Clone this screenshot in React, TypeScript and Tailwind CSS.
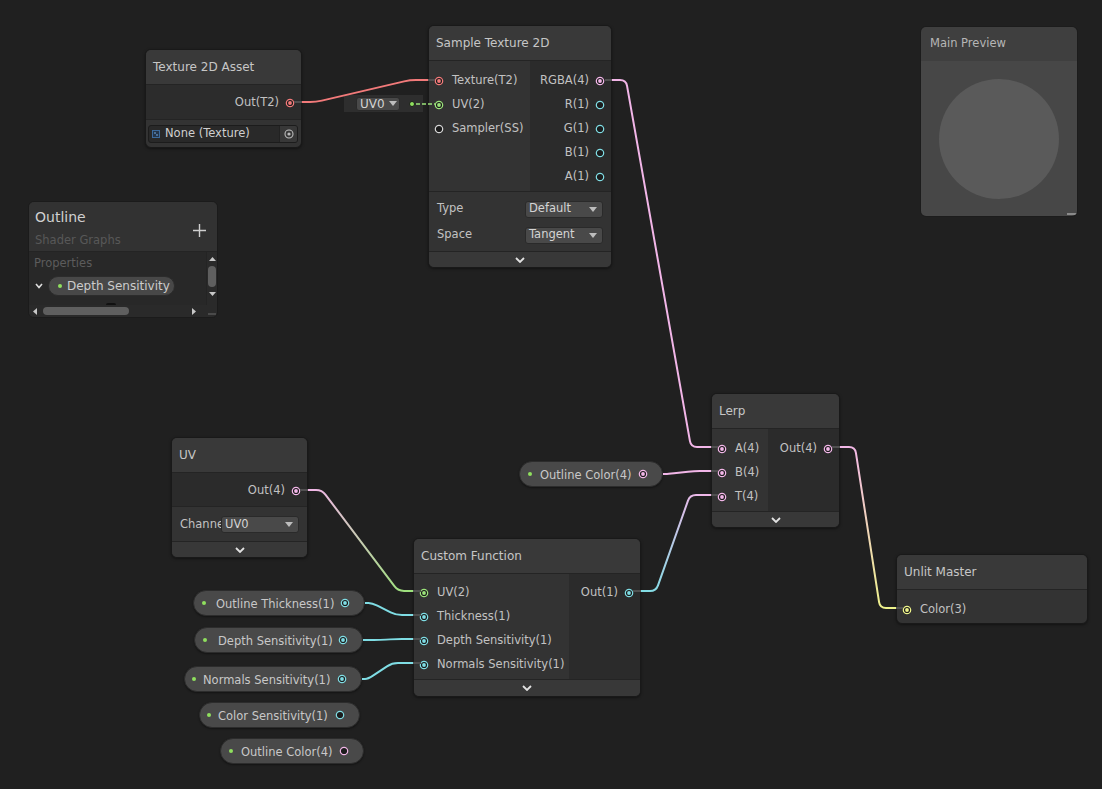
import React from 'react'

const PINK = '#f2b6e8'
const CYAN = '#7fdde4'
const GREEN = '#9be27a'
const YELLOW = '#eef38a'
const RED = '#f27a7a'
const STUB = '#505050'

type Pt = [number, number]

// rounded polyline, like the graph view wires
function wirePath(pts: Pt[], r = 6) {
  let d = `M ${pts[0][0]} ${pts[0][1]}`
  for (let i = 1; i < pts.length - 1; i++) {
    const [px, py] = pts[i - 1]
    const [cx, cy] = pts[i]
    const [nx, ny] = pts[i + 1]
    const l1 = Math.hypot(cx - px, cy - py)
    const l2 = Math.hypot(nx - cx, ny - cy)
    const r1 = Math.min(r, l1 / 2)
    const r2 = Math.min(r, l2 / 2)
    const ax = cx - ((cx - px) / l1) * r1
    const ay = cy - ((cy - py) / l1) * r1
    const bx = cx + ((nx - cx) / l2) * r2
    const by = cy + ((ny - cy) / l2) * r2
    d += ` L ${ax} ${ay} Q ${cx} ${cy} ${bx} ${by}`
  }
  const last = pts[pts.length - 1]
  return d + ` L ${last[0]} ${last[1]}`
}

function Port({ color, connected = false }: { color: string; connected?: boolean }) {
  return (
    <svg width="10" height="10" viewBox="0 0 10 10" className="shrink-0">
      <circle cx="5" cy="5" r="3.7" fill="#1c1c1c" stroke={color} strokeWidth="1.2" />
      {connected && <circle cx="5" cy="5" r="1.9" fill={color} />}
    </svg>
  )
}

function InRow({ label, color, connected }: { label: string; color: string; connected?: boolean }) {
  return (
    <div className="flex h-[24px] items-center gap-[8px] pl-[5px] whitespace-nowrap">
      <Port color={color} connected={connected} />
      <span>{label}</span>
    </div>
  )
}

function OutRow({ label, color, connected }: { label: string; color: string; connected?: boolean }) {
  return (
    <div className="flex h-[24px] items-center justify-end gap-[6px] pr-[6px] whitespace-nowrap">
      <span>{label}</span>
      <Port color={color} connected={connected} />
    </div>
  )
}

function Tri() {
  return (
    <svg width="8" height="5" viewBox="0 0 8 5" className="shrink-0">
      <polygon points="0,0 8,0 4,5" fill="#bdbdbd" />
    </svg>
  )
}

function Dropdown({ value, className }: { value: string; className: string }) {
  return (
    <div
      className={`flex items-center justify-between rounded-[3px] border border-[#2a2a2a] bg-[#494949] pl-[3px] pr-[5px] text-[#d4d4d4] ${className}`}
    >
      <span>{value}</span>
      <Tri />
    </div>
  )
}

function ChevronBar({ className = 'h-[16px]' }: { className?: string }) {
  return (
    <div className={`flex shrink-0 items-center justify-center border-t border-[#242424] bg-[#383838] ${className}`}>
      <svg width="10" height="6" viewBox="0 0 10 6">
        <polyline points="1,1 5,5 9,1" fill="none" stroke="#e2e2e2" strokeWidth="1.8" />
      </svg>
    </div>
  )
}

function Node({ className, title, children }: { className: string; title: string; children: React.ReactNode }) {
  return (
    <div
      className={`absolute flex flex-col overflow-hidden rounded-[6px] border border-[#191919] bg-[#333333] shadow-[0_1px_3px_rgba(0,0,0,0.45)] ${className}`}
    >
      <div className="flex h-[35px] shrink-0 items-center border-b border-[#242424] bg-[#393939] px-[7px] text-[12px] text-[#c6c6c6]">
        {title}
      </div>
      {children}
    </div>
  )
}

function Pill({
  className,
  label,
  color,
  connected,
  pad,
  gap,
}: {
  className: string
  label: string
  color: string
  connected?: boolean
  pad: string
  gap: string
}) {
  return (
    <div
      className={`absolute flex h-[26px] items-center rounded-full border border-[#2c2c2c] bg-[#494949] pr-[14px] whitespace-nowrap text-[#c8c8c8] shadow-[0_1px_2px_rgba(0,0,0,0.4)] ${pad} ${className}`}
    >
      <span className="h-[4px] w-[4px] shrink-0 rounded-full bg-[#8fe05e]" />
      <span className={`pt-[3px] ${gap}`}>{label}</span>
      <span className="ml-auto">
        <Port color={color} connected={connected} />
      </span>
    </div>
  )
}

function Blackboard() {
  return (
    <div className="absolute left-[28px] top-[201px] flex h-[117px] w-[190px] flex-col overflow-hidden rounded-[6px] border border-[#1b1b1b] bg-[#282828]">
      <div className="flex h-[50px] shrink-0 justify-between border-b border-[#242424] bg-[#323232] pl-[6px] pr-[11px]">
        <div className="flex flex-col pt-[6px]">
          <span className="text-[14px] leading-[18px] text-[#d0d0d0]">Outline</span>
          <span className="mt-[7px] text-[11.5px] leading-[14px] text-[#585858]">Shader Graphs</span>
        </div>
        <svg width="13" height="13" viewBox="0 0 13 13" className="mt-[22px]">
          <line x1="6.5" y1="0" x2="6.5" y2="13" stroke="#cfcfcf" strokeWidth="1.4" />
          <line x1="0" y1="6.5" x2="13" y2="6.5" stroke="#cfcfcf" strokeWidth="1.4" />
        </svg>
      </div>
      <div className="flex flex-1">
        <div className="relative flex-1 pl-[5px]">
          <div className="pt-[4px] text-[11.5px] leading-[14px] text-[#5c5c5c]">Properties</div>
          <div className="mt-[6px] flex items-center">
            <svg width="8" height="6" viewBox="0 0 8 6" className="ml-[1px]">
              <polyline points="1,1 4,4.5 7,1" fill="none" stroke="#dcdcdc" strokeWidth="1.6" />
            </svg>
            <div className="ml-[5px] flex h-[20px] w-[127px] items-center rounded-full border border-[#2c2c2c] bg-[#484848] pl-[9px] text-[12px] text-[#cccccc]">
              <span className="h-[4px] w-[4px] rounded-full bg-[#8fe05e]" />
              <span className="ml-[5px]">Depth Sensitivity</span>
            </div>
          </div>
          <div className="absolute left-[77px] bottom-0 h-[2px] w-[10px] rounded-t bg-[#111111]" />
        </div>
        <div className="flex w-[11px] flex-col items-center border-l border-[#242424] bg-[#2a2a2a] pt-[5px]">
          <svg width="7" height="4" viewBox="0 0 7 4">
            <polygon points="0,4 7,4 3.5,0" fill="#c8c8c8" />
          </svg>
          <div className="mt-[5px] h-[21px] w-[8px] rounded-[4px] bg-[#5f5f5f]" />
          <svg width="7" height="4" viewBox="0 0 7 4" className="mt-[5px]">
            <polygon points="0,0 7,0 3.5,4" fill="#c8c8c8" />
          </svg>
        </div>
      </div>
      <div className="flex h-[12px] shrink-0 items-center bg-[#2a2a2a] pl-[4px]">
        <svg width="4" height="7" viewBox="0 0 4 7">
          <polygon points="4,0 4,7 0,3.5" fill="#c8c8c8" />
        </svg>
        <div className="ml-[6px] h-[8px] w-[86px] rounded-[4px] bg-[#5f5f5f]" />
        <svg width="4" height="7" viewBox="0 0 4 7" className="ml-[63px]">
          <polygon points="0,0 0,7 4,3.5" fill="#c8c8c8" />
        </svg>
        <div className="ml-auto mt-[8px] h-[2px] w-[8px] self-start bg-[#4a4a4a] mr-[1px]" />
      </div>
    </div>
  )
}

function MainPreview() {
  return (
    <div className="absolute left-[920px] top-[26px] flex h-[191px] w-[158px] flex-col overflow-hidden rounded-[6px] border border-[#1c1c1c]">
      <div className="flex h-[34px] shrink-0 items-center bg-[#3f3f3f] pl-[9px] text-[11.5px] text-[#b6b6b6]">
        Main Preview
      </div>
      <div className="relative flex flex-1 items-center justify-center bg-[#474747]">
        <div className="h-[120px] w-[120px] rounded-full bg-[#5a5a5a]" />
        <div className="absolute bottom-[1px] right-0 h-[2px] w-[10px] bg-[#8a8a8a]" />
      </div>
    </div>
  )
}

type Wire = { pts: Pt[]; stroke: string }

const wires: Wire[] = [
  { pts: [[302, 102], [316, 102], [410, 80], [428, 80]], stroke: RED },
  { pts: [[612, 80], [626, 80], [691, 447], [711, 447]], stroke: PINK },
  { pts: [[663, 474], [668, 474], [694, 471], [711, 471]], stroke: PINK },
  { pts: [[641, 591], [656, 591], [690, 495], [711, 495]], stroke: 'url(#cfT)' },
  { pts: [[840, 447], [855, 447], [880, 608], [896, 608]], stroke: 'url(#lerpOut)' },
  { pts: [[308, 490], [322, 490], [398, 591], [413, 591]], stroke: 'url(#uvOut)' },
  { pts: [[365, 603], [372, 603], [396, 615], [413, 615]], stroke: CYAN },
  { pts: [[363, 640], [380, 640], [396, 639], [413, 639]], stroke: CYAN },
  { pts: [[362, 679], [368, 679], [392, 663], [413, 663]], stroke: CYAN },
]

const stubs: [number, number, number][] = [
  [294, 302, 102],
  [428, 435, 80],
  [605, 612, 80],
  [711, 718, 447],
  [711, 718, 471],
  [711, 718, 495],
  [832, 840, 447],
  [896, 903, 608],
  [413, 421, 591],
  [413, 421, 615],
  [413, 421, 639],
  [413, 421, 663],
  [633, 641, 591],
  [300, 308, 490],
]

function Wires() {
  return (
    <svg className="pointer-events-none absolute left-0 top-0" width="1102" height="789">
      <defs>
        <linearGradient id="cfT" gradientUnits="userSpaceOnUse" x1="641" y1="591" x2="711" y2="495">
          <stop offset="0" stopColor={CYAN} />
          <stop offset="1" stopColor={PINK} />
        </linearGradient>
        <linearGradient id="lerpOut" gradientUnits="userSpaceOnUse" x1="840" y1="447" x2="896" y2="608">
          <stop offset="0" stopColor={PINK} />
          <stop offset="1" stopColor={YELLOW} />
        </linearGradient>
        <linearGradient id="uvOut" gradientUnits="userSpaceOnUse" x1="308" y1="490" x2="413" y2="591">
          <stop offset="0" stopColor={PINK} />
          <stop offset="1" stopColor={GREEN} />
        </linearGradient>
      </defs>
      {wires.map((w, i) => (
        <path key={i} d={wirePath(w.pts)} fill="none" stroke={w.stroke} strokeWidth="2" />
      ))}
      {stubs.map(([x1, x2, y], i) => (
        <line key={`s${i}`} x1={x1} x2={x2} y1={y} y2={y} stroke={STUB} strokeWidth="2" />
      ))}
      <line x1="416" x2="435" y1="104" y2="104" stroke={GREEN} strokeWidth="1.5" strokeDasharray="4 2" />
    </svg>
  )
}

export default function App() {
  return (
    <div className="relative h-[789px] w-[1102px] overflow-hidden bg-[#202020] font-['DejaVu_Sans',sans-serif] text-[11.5px] text-[#c2c2c2]">
      <Node className="left-[145px] top-[49px] w-[157px]" title="Texture 2D Asset">
        <div className="h-[34px] bg-[#2c2c2c] pt-[6px]">
          <OutRow label="Out(T2)" color={RED} connected />
        </div>
        <div className="flex h-[28px] items-center border-t border-[#242424] pl-[2px] pr-[3px]">
          <div className="flex h-[18px] flex-1 items-center overflow-hidden rounded-[3px] border border-[#1c1c1c] bg-[#292929] pl-[3px]">
            <svg width="8" height="8" viewBox="0 0 8 8">
              <rect x="0.5" y="0.5" width="7" height="7" fill="#24354a" stroke="#3c6a9c" />
              <rect x="2" y="2" width="2" height="2" fill="#4a6f96" />
              <rect x="4" y="4" width="2" height="2" fill="#4a6f96" />
            </svg>
            <span className="ml-[5px] text-[#cfcfcf]">None (Texture)</span>
            <div className="ml-auto flex h-full w-[18px] items-center justify-center border-l border-[#222] bg-[#383838]">
              <svg width="10" height="10" viewBox="0 0 10 10">
                <circle cx="5" cy="5" r="4" fill="none" stroke="#bdbdbd" strokeWidth="1.1" />
                <circle cx="5" cy="5" r="1.6" fill="#bdbdbd" />
              </svg>
            </div>
          </div>
        </div>
      </Node>

      <div className="absolute left-[344px] top-[95px] flex h-[17px] w-[79px] items-center bg-[#2e2e2e] pl-[12px]">
        <Dropdown value="UV0" className="h-[14px] w-[44px] gap-[4px] text-[12px]" />
        <span className="ml-auto mr-[8px] h-[6px] w-[6px] rounded-full border border-[#1a1a1a] bg-[#8fe05e]" />
      </div>

      <Node className="left-[428px] top-[25px] w-[184px]" title="Sample Texture 2D">
        <div className="flex h-[130px]">
          <div className="w-[101px] bg-[#333333] pt-[8px]">
            <InRow label="Texture(T2)" color={RED} connected />
            <InRow label="UV(2)" color={GREEN} connected />
            <InRow label="Sampler(SS)" color="#d6d6d6" />
          </div>
          <div className="flex-1 bg-[#2b2b2b] pt-[8px]">
            <OutRow label="RGBA(4)" color={PINK} connected />
            <OutRow label="R(1)" color={CYAN} />
            <OutRow label="G(1)" color={CYAN} />
            <OutRow label="B(1)" color={CYAN} />
            <OutRow label="A(1)" color={CYAN} />
          </div>
        </div>
        <div className="flex h-[60px] flex-col border-t border-[#242424] pt-[4px] pl-[8px] pr-[8px]">
          <div className="flex h-[26px] items-center justify-between">
            <span>Type</span>
            <Dropdown value="Default" className="h-[17px] w-[78px]" />
          </div>
          <div className="flex h-[26px] items-center justify-between">
            <span>Space</span>
            <Dropdown value="Tangent" className="h-[17px] w-[78px]" />
          </div>
        </div>
        <ChevronBar />
      </Node>

      <Blackboard />
      <MainPreview />

      <Node className="left-[171px] top-[437px] w-[137px]" title="UV">
        <div className="h-[33px] bg-[#2b2b2b] pt-[6px]">
          <OutRow label="Out(4)" color={PINK} connected />
        </div>
        <div className="flex h-[35px] items-center border-t border-[#242424] pl-[8px] pt-[1px]">
          <span className="w-[41px] overflow-hidden whitespace-nowrap">Channel</span>
          <Dropdown value="UV0" className="h-[17px] w-[78px]" />
        </div>
        <ChevronBar />
      </Node>

      <Node className="left-[413px] top-[538px] w-[228px]" title="Custom Function">
        <div className="flex h-[105px]">
          <div className="w-[155px] bg-[#333333] pt-[7px]">
            <InRow label="UV(2)" color={GREEN} connected />
            <InRow label="Thickness(1)" color={CYAN} connected />
            <InRow label="Depth Sensitivity(1)" color={CYAN} connected />
            <InRow label="Normals Sensitivity(1)" color={CYAN} connected />
          </div>
          <div className="flex-1 bg-[#2b2b2b] pt-[7px]">
            <OutRow label="Out(1)" color={CYAN} connected />
          </div>
        </div>
        <ChevronBar className="h-[17px]" />
      </Node>

      <Node className="left-[711px] top-[393px] w-[129px]" title="Lerp">
        <div className="flex h-[82px]">
          <div className="w-[56px] bg-[#333333] pt-[8px]">
            <InRow label="A(4)" color={PINK} connected />
            <InRow label="B(4)" color={PINK} connected />
            <InRow label="T(4)" color={PINK} connected />
          </div>
          <div className="flex-1 bg-[#2b2b2b] pt-[8px]">
            <OutRow label="Out(4)" color={PINK} connected />
          </div>
        </div>
        <ChevronBar />
      </Node>

      <Node className="left-[896px] top-[554px] w-[192px]" title="Unlit Master">
        <div className="h-[33px] pt-[8px]">
          <InRow label="Color(3)" color={YELLOW} connected />
        </div>
      </Node>

      <Pill className="left-[519px] top-[461px] w-[144px]" pad="pl-[8px]" gap="ml-[8px]" label="Outline Color(4)" color={PINK} connected />
      <Pill className="left-[193px] top-[590px] w-[172px]" pad="pl-[8px]" gap="ml-[10px]" label="Outline Thickness(1)" color={CYAN} connected />
      <Pill className="left-[194px] top-[627px] w-[169px]" pad="pl-[8px]" gap="ml-[11px]" label="Depth Sensitivity(1)" color={CYAN} connected />
      <Pill className="left-[184px] top-[666px] w-[178px]" pad="pl-[7px]" gap="ml-[7px]" label="Normals Sensitivity(1)" color={CYAN} connected />
      <Pill className="left-[199px] top-[702px] w-[161px]" pad="pl-[7px]" gap="ml-[7px]" label="Color Sensitivity(1)" color={CYAN} />
      <Pill className="left-[220px] top-[738px] w-[144px]" pad="pl-[8px]" gap="ml-[8px]" label="Outline Color(4)" color={PINK} />

      <Wires />
    </div>
  )
}
